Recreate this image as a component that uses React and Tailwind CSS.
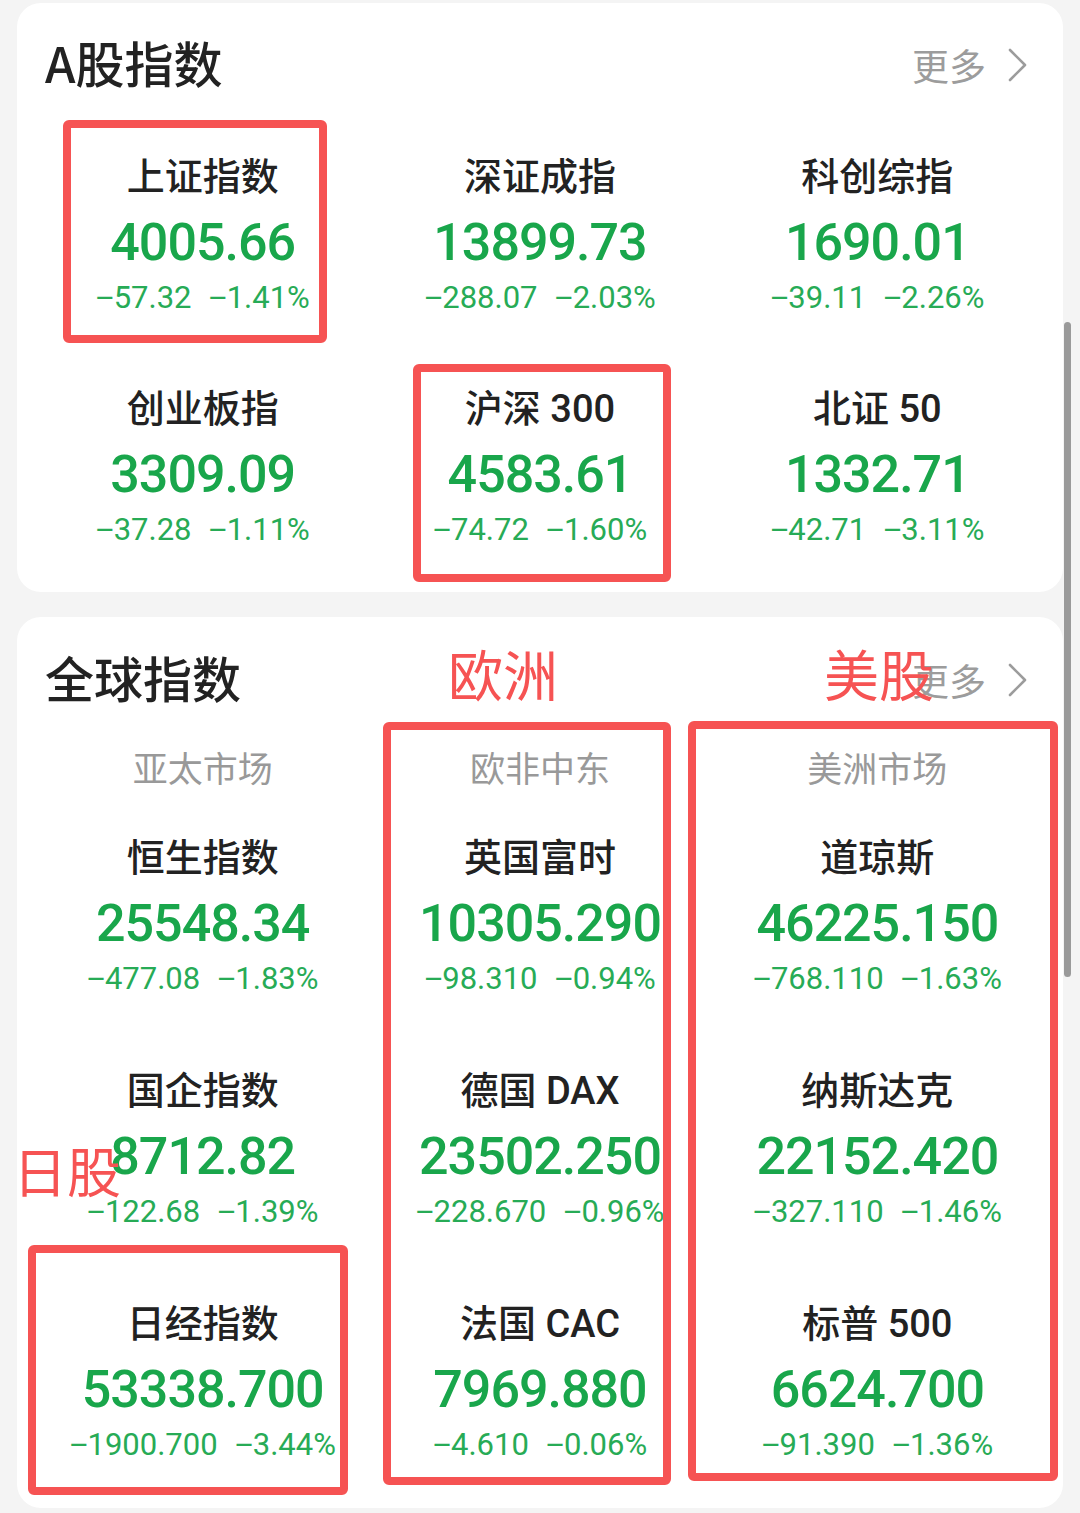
import React from 'react';

// ---------------------------------------------------------------------------
// Data
// ---------------------------------------------------------------------------
const A_SHARES = [
  { name: '上证指数', value: '4005.66', chg: '57.32', pct: '1.41' },
  { name: '深证成指', value: '13899.73', chg: '288.07', pct: '2.03' },
  { name: '科创综指', value: '1690.01', chg: '39.11', pct: '2.26' },
  { name: '创业板指', value: '3309.09', chg: '37.28', pct: '1.11' },
  { name: '沪深 300', value: '4583.61', chg: '74.72', pct: '1.60' },
  { name: '北证 50', value: '1332.71', chg: '42.71', pct: '3.11' },
];

const GLOBAL = [
  { name: '恒生指数', value: '25548.34', chg: '477.08', pct: '1.83' },
  { name: '英国富时', value: '10305.290', chg: '98.310', pct: '0.94' },
  { name: '道琼斯', value: '46225.150', chg: '768.110', pct: '1.63' },
  { name: '国企指数', value: '8712.82', chg: '122.68', pct: '1.39' },
  { name: '德国 DAX', value: '23502.250', chg: '228.670', pct: '0.96' },
  { name: '纳斯达克', value: '22152.420', chg: '327.110', pct: '1.46' },
  { name: '日经指数', value: '53338.700', chg: '1900.700', pct: '3.44' },
  { name: '法国 CAC', value: '7969.880', chg: '4.610', pct: '0.06' },
  { name: '标普 500', value: '6624.700', chg: '91.390', pct: '1.36' },
];

const REGIONS = ['亚太市场', '欧非中东', '美洲市场'];

// ---------------------------------------------------------------------------
// Pieces
// ---------------------------------------------------------------------------
function MoreLink() {
  return (
    <div className="flex items-center gap-[22px] text-[#9c9c9c]">
      <span className="text-[37px] leading-none">更多</span>
      <svg width="20" height="34" viewBox="0 0 20 34" fill="none">
        <polyline points="2,2 17,17 2,32" stroke="#9c9c9c" strokeWidth="2.6" strokeLinecap="round" strokeLinejoin="round" />
      </svg>
    </div>
  );
}

// long minus like the app's number font
const Minus = () => <span className="font-['Liberation_Sans',sans-serif]">−</span>;

function Quote({ name, value, chg, pct }) {
  return (
    <div className="flex flex-col items-center whitespace-nowrap">
      <div className="text-[38px] leading-[44px] font-medium text-[#222] font-['Roboto','Noto_Sans_CJK_SC',sans-serif]">
        {name}
      </div>
      <div className="mt-[14px] text-[52px] leading-[60px] font-medium tracking-[-1px] text-[#19a64b] font-['Roboto',sans-serif]">
        {value}
      </div>
      <div className="mt-[5px] flex gap-[17px] text-[31px] leading-[40px] text-[#27ab56] font-['Roboto',sans-serif]">
        <span><Minus />{chg}</span>
        <span><Minus />{pct}%</span>
      </div>
    </div>
  );
}

function Mark({ className }) {
  return <div className={`absolute rounded-[6px] border-[8px] border-[#f65353] ${className}`} />;
}

// ---------------------------------------------------------------------------
// Page
// ---------------------------------------------------------------------------
export default function App() {
  return (
    <div className="relative h-[1513px] w-[1080px] overflow-hidden bg-[#f4f4f4] px-[17px] pt-[3px] font-['Noto_Sans_CJK_SC',sans-serif]">
      {/* A-share card */}
      <section className="rounded-[24px] bg-white px-[17px] pb-[42px]">
        <div className="flex h-[124px] items-center justify-between pl-[11px] pr-[18px]">
          <h2 className="mb-[8px] text-[49px] leading-none font-medium text-[#222]">A股指数</h2>
          <MoreLink />
        </div>
        <div className="mt-[28px] grid grid-cols-3 gap-y-[69px]">
          {A_SHARES.map((q) => (
            <Quote key={q.name} {...q} />
          ))}
        </div>
      </section>

      {/* Global card */}
      <section className="mt-[25px] rounded-[24px] bg-white px-[17px] pb-[43px]">
        <div className="flex h-[126px] items-center justify-between pl-[11px] pr-[18px]">
          <h2 className="mb-[8px] text-[49px] leading-none font-medium text-[#222]">全球指数</h2>
          <MoreLink />
        </div>
        <div className="mt-[4px] grid grid-cols-3">
          {REGIONS.map((r) => (
            <div key={r} className="text-center text-[35px] leading-[40px] text-[#999]">
              {r}
            </div>
          ))}
        </div>
        <div className="mt-[49px] grid grid-cols-3 gap-y-[70px]">
          {GLOBAL.map((q) => (
            <Quote key={q.name} {...q} />
          ))}
        </div>
      </section>

      {/* scrollbar */}
      <div className="absolute left-[1064px] top-[322px] h-[655px] w-[7px] rounded-full bg-[#9a9a9a]" />

      {/* annotations */}
      <Mark className="left-[63px] top-[120px] h-[223px] w-[264px]" />
      <Mark className="left-[413px] top-[364px] h-[218px] w-[258px]" />
      <Mark className="left-[383px] top-[722px] h-[763px] w-[288px]" />
      <Mark className="left-[688px] top-[721px] h-[760px] w-[370px]" />
      <Mark className="left-[28px] top-[1245px] h-[250px] w-[320px]" />
      <div className="absolute left-[448px] top-[645px] text-[55px] leading-none text-[#f65353]">欧洲</div>
      <div className="absolute left-[824px] top-[645px] text-[55px] leading-none text-[#f65353]">美股</div>
      <div className="absolute left-[13px] top-[1143px] text-[54px] leading-none text-[#f65353]">日股</div>
    </div>
  );
}
